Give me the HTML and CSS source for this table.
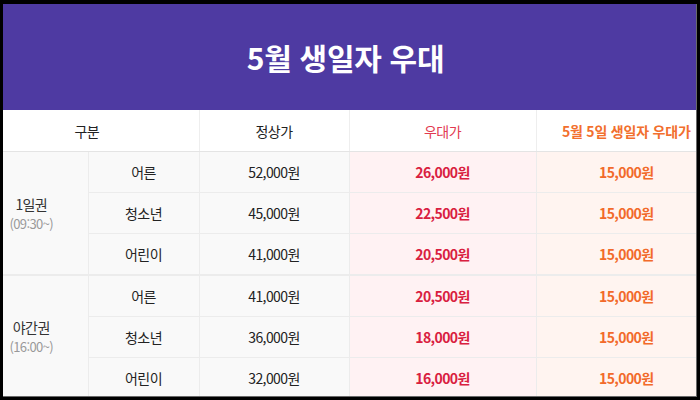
FILE: index.html
```html
<!DOCTYPE html>
<html lang="ko">
<head>
<meta charset="utf-8">
<title>5월 생일자 우대</title>
<link rel="stylesheet" href="styles.css">
</head>
<body>
<div class="frame">
  <div class="sheet">
    <h1 class="title">5월 생일자 우대</h1>
    <table class="price">
      <colgroup>
        <col class="c1"><col class="c2"><col class="c3"><col class="c4"><col class="c5">
      </colgroup>
      <thead>
        <tr>
          <th colspan="2">구분</th>
          <th>정상가</th>
          <th class="h-deal">우대가</th>
          <th class="h-bday">5월 5일 생일자 우대가</th>
        </tr>
      </thead>
      <tbody class="grp">
        <tr>
          <td rowspan="3" class="kind"><span class="kname">1일권</span><span class="ktime">(09:30~)</span></td>
          <td>어른</td><td>52,000원</td><td class="deal">26,000원</td><td class="bday">15,000원</td>
        </tr>
        <tr><td>청소년</td><td>45,000원</td><td class="deal">22,500원</td><td class="bday">15,000원</td></tr>
        <tr class="last"><td>어린이</td><td>41,000원</td><td class="deal">20,500원</td><td class="bday">15,000원</td></tr>
      </tbody>
      <tbody class="grp">
        <tr>
          <td rowspan="3" class="kind"><span class="kname">야간권</span><span class="ktime">(16:00~)</span></td>
          <td>어른</td><td>41,000원</td><td class="deal">20,500원</td><td class="bday">15,000원</td>
        </tr>
        <tr><td>청소년</td><td>36,000원</td><td class="deal">18,000원</td><td class="bday">15,000원</td></tr>
        <tr><td>어린이</td><td>32,000원</td><td class="deal">16,000원</td><td class="bday">15,000원</td></tr>
      </tbody>
    </table>
  </div>
</div>
</body>
</html>
```

FILE: styles.css
```css
html, body {
  margin: 0;
  padding: 0;
  background: #000;
}
body {
  width: 700px;
  height: 400px;
  overflow: hidden;
}
.frame {
  margin: 4px 0 0 3px;
  width: 693px;
  height: 392px;
  overflow: hidden;
  border-right: 1px solid #6a6a6a;
  border-bottom: 1px solid #6a6a6a;
  background: #fff;
}
.sheet {
  width: 741px;
  margin-left: -28px;
  font-family: "Noto Sans CJK KR", "Noto Sans", sans-serif;
}
.title {
  margin: 0;
  height: 106px;
  display: flex;
  align-items: center;
  justify-content: center;
  background: #4e3aa2;
  color: #fff;
  font-size: 30px;
  font-weight: 700;
  letter-spacing: -0.3px;
}
.price {
  width: 741px;
  border-collapse: collapse;
  table-layout: fixed;
  font-size: 14px;
  letter-spacing: -0.6px;
}
.c1 { width: 113px; }
.c2 { width: 111px; }
.c3 { width: 150px; }
.c4 { width: 187px; }
.c5 { width: 180px; }
.price th {
  height: 41px;
  padding: 0;
  font-weight: 400;
  color: #222;
  background: #fff;
  border-bottom: 1px solid #e4e4e4;
  border-left: 1px solid #eeeeee;
}
.price th:first-child { border-left: none; }
.price th.h-deal { color: #e23a50; }
.price th.h-bday {
  color: #f26f2e;
  font-weight: 700;
  letter-spacing: -0.2px;
  white-space: nowrap;
}
.price td {
  height: 40px;
  padding: 0;
  text-align: center;
  color: #222;
  background: #f9f9f9;
  border-bottom: 1px solid #ececec;
  border-left: 1px solid #ececec;
}
.price td.kind {
  border-left: none;
  vertical-align: middle;
}
.price tr.last td,
.price td.kind { border-bottom: 2px solid #ececec; }
.kname {
  display: block;
  line-height: 20px;
  color: #333;
}
.ktime {
  display: block;
  line-height: 19px;
  font-size: 13px;
  color: #999;
}
.price td.deal {
  background: #fff2f3;
  color: #d9203f;
  font-weight: 700;
}
.price td.bday {
  background: #fff4f0;
  color: #f26a2a;
  font-weight: 700;
}
```
